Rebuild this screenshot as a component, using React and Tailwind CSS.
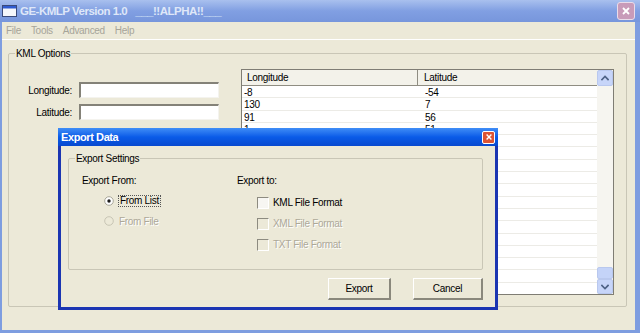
const FONT = { fontFamily: "'Liberation Sans', Arial, sans-serif" };

const points = [
  ["-8", "-54"],
  ["130", "7"],
  ["91", "56"],
  ["1", "51"],
];

function ChevronUp({ className }) {
  return (
    <svg className={className} viewBox="0 0 8 6" fill="none" stroke="currentColor" strokeWidth="1.6" aria-hidden>
      <path d="M1 4.5L4 1.5L7 4.5" strokeLinecap="square" />
    </svg>
  );
}

function ChevronDown({ className }) {
  return (
    <svg className={className} viewBox="0 0 8 6" fill="none" stroke="currentColor" strokeWidth="1.6" aria-hidden>
      <path d="M1 1.5L4 4.5L7 1.5" strokeLinecap="square" />
    </svg>
  );
}

function CloseX({ className }) {
  return (
    <svg className={className} viewBox="0 0 10 10" fill="none" stroke="currentColor" strokeWidth="1.8" aria-hidden>
      <path d="M2 2L8 8M8 2L2 8" />
    </svg>
  );
}

function AppIcon() {
  return (
    <svg width="15" height="12" viewBox="0 0 15 12" aria-hidden>
      <rect x="0.5" y="0.5" width="14" height="11" fill="#f4f6fb" stroke="#3a4a7a" />
      <rect x="1" y="1" width="13" height="2.5" fill="#2f5bd0" />
    </svg>
  );
}

function Radio({ checked, disabled, label }) {
  return (
    <div className="flex h-[20px] items-center pl-[22px]">
      <svg width="10" height="10" viewBox="0 0 10 10" aria-hidden>
        <circle cx="5" cy="5" r="4.3" fill={disabled ? "#ece9d8" : "#ffffff"} stroke={disabled ? "#c8c5b5" : "#a9a799"} />
        {checked && <circle cx="5" cy="5" r="1.7" fill="#1c1c1c" />}
      </svg>
      {disabled ? (
        <span className="ml-[5px] text-[#aca899] [text-shadow:1px_1px_0_#ffffff]">{label}</span>
      ) : (
        <span className="ml-[4px] border border-dotted border-[#555] px-[1px] leading-[10px] text-black">{label}</span>
      )}
    </div>
  );
}

function Check({ disabled, label }) {
  return (
    <div className="flex h-[21px] items-center pl-[20px]">
      <div
        className={`h-[12px] w-[12px] border-t border-l border-b border-r border-t-[#8d8b80] border-l-[#8d8b80] border-b-white border-r-white ${
          disabled ? "bg-[#ece9d8]" : "bg-[#f7f6f2]"
        }`}
      />
      <span className={`ml-[4px] ${disabled ? "text-[#aca899] [text-shadow:1px_1px_0_#ffffff]" : "text-black"}`}>{label}</span>
    </div>
  );
}

function Button({ children, width }) {
  return (
    <button
      className={`${width} h-[22px] border-t border-l border-b-2 border-r-2 border-t-white border-l-white border-b-[#8a887c] border-r-[#8a887c] bg-[#ece9d8] text-black`}
    >
      {children}
    </button>
  );
}

export default function App() {
  const rows = [...points, ...Array.from({ length: 14 }, () => ["", ""])];

  return (
    <div
      className="relative flex h-[333px] w-[640px] flex-col overflow-hidden bg-[#ece9d8] text-[10px] leading-[13px] tracking-[-0.3px] text-black"
      style={FONT}
    >
      {/* main window title bar (inactive) */}
      <div className="flex h-[22px] shrink-0 items-center bg-gradient-to-b from-[#a9c0ee] via-[#819fe2] to-[#7796dc] pl-[2px] pr-[5px]">
        <AppIcon />
        <span className="ml-[3px] whitespace-pre text-[11.5px] font-bold tracking-[-0.5px] text-[#dfe7f8]">GE-KMLP Version 1.0   ___!!ALPHA!!___</span>
        <div className="ml-auto flex h-[18px] w-[18px] items-center justify-center rounded-[3px] border border-[#e9dcea] bg-[#c89bb9]">
          <CloseX className="h-[10px] w-[10px] text-white" />
        </div>
      </div>

      <div className="flex flex-1 flex-col border-b-[3px] border-l-[2px] border-r-[5px] border-[#7e9de0]">
        {/* menu bar */}
        <div className="flex h-[18px] shrink-0 items-center gap-[10px] border-b border-white pl-[4px] text-[#a6a498]">
          <span>File</span>
          <span>Tools</span>
          <span>Advanced</span>
          <span>Help</span>
        </div>

        {/* KML Options group */}
        <div className="relative ml-[6px] mr-[8px] mt-[13px] h-[254px] rounded-[2px] border border-[#c9c6b6]">
          <span className="absolute -top-[7px] left-[6px] bg-[#ece9d8] px-[1px]">KML Options</span>
          <div className="flex pt-[15px]">
            <div className="flex w-[232px] flex-col gap-[6px] pt-[13px]">
              <div className="flex items-center">
                <span className="w-[63px] text-right">Longitude:</span>
                <div className="ml-[7px] h-[16px] w-[140px] border-t-2 border-l-2 border-b border-r border-t-[#848278] border-l-[#848278] border-b-[#f4f3ee] border-r-[#f4f3ee] bg-white" />
              </div>
              <div className="flex items-center">
                <span className="w-[63px] text-right">Latitude:</span>
                <div className="ml-[7px] h-[16px] w-[140px] border-t-2 border-l-2 border-b border-r border-t-[#848278] border-l-[#848278] border-b-[#f4f3ee] border-r-[#f4f3ee] bg-white" />
              </div>
            </div>

            {/* list view */}
            <div className="flex h-[226px] w-[373px] border border-[#7f7d74] bg-white">
              <div className="flex flex-1 flex-col overflow-hidden">
                <div className="flex h-[16px] shrink-0 border-b border-[#8f8d82] bg-[#f3f2ea]">
                  <div className="w-[176px] border-r border-[#8f8d82] pl-[5px] leading-[15px]">Longitude</div>
                  <div className="flex-1 pl-[6px] leading-[15px]">Latitude</div>
                </div>
                {rows.map((r, i) => (
                  <div key={i} className="flex h-[12.3px] shrink-0 border-b border-[#ecebe6] pt-[1px] leading-[11px]">
                    <div className="w-[176px] pl-[2px]">{r[0]}</div>
                    <div className="flex-1 pl-[7px]">{r[1]}</div>
                  </div>
                ))}
              </div>
              {/* scrollbar */}
              <div className="flex w-[16px] flex-col bg-[#f6f5f0]">
                <div className="flex h-[16px] items-center justify-center rounded-[2px] border border-[#b9c8ee] bg-[#c7d5f9]">
                  <ChevronUp className="h-[6px] w-[8px] text-[#4d6185]" />
                </div>
                <div className="flex-1" />
                <div className="h-[12px] rounded-[2px] border border-[#b9c8ee] bg-[#c4d3f8]" />
                <div className="flex h-[15px] items-center justify-center rounded-[2px] border border-[#b9c8ee] bg-[#c7d5f9]">
                  <ChevronDown className="h-[6px] w-[8px] text-[#4d6185]" />
                </div>
              </div>
            </div>
          </div>
        </div>
      </div>

      {/* Export Data dialog */}
      <div className="absolute left-[58px] top-[128px] flex h-[182px] w-[440px] flex-col">
        <div className="flex h-[18px] shrink-0 items-center bg-gradient-to-b from-[#3f8df6] via-[#0a5be8] to-[#0849cf] pl-[3px] pr-[3px]">
          <span className="text-[11px] font-bold tracking-[-0.4px] text-white">Export Data</span>
          <div className="ml-auto flex h-[13px] w-[13px] items-center justify-center rounded-[2px] border border-white bg-[#dc5434]">
            <CloseX className="h-[8px] w-[8px] text-white" />
          </div>
        </div>
        <div className="flex flex-1 flex-col border-b-[3px] border-l-[3px] border-r-[3px] border-[#1b35b2] bg-[#ece9d8]">
          <div className="relative ml-[7px] mr-[12px] mt-[12px] h-[112px] rounded-[2px] border border-[#c9c6b6]">
            <span className="absolute -top-[7px] left-[6px] bg-[#ece9d8] px-[1px]">Export Settings</span>
            <div className="flex pl-[13px] pt-[15px]">
              <div className="flex w-[155px] flex-col">
                <span className="h-[13px]">Export From:</span>
                <div className="mt-[4px]">
                  <Radio checked label="From List" />
                  <Radio disabled label="From File" />
                </div>
              </div>
              <div className="flex flex-col">
                <span className="h-[13px]">Export to:</span>
                <div className="mt-[5px]">
                  <Check label="KML File Format" />
                  <Check disabled label="XML File Format" />
                  <Check disabled label="TXT File Format" />
                </div>
              </div>
            </div>
          </div>
          <div className="mr-[12px] mt-[8px] flex justify-end gap-[22px]">
            <Button width="w-[63px]">Export</Button>
            <Button width="w-[70px]">Cancel</Button>
          </div>
        </div>
      </div>
    </div>
  );
}
